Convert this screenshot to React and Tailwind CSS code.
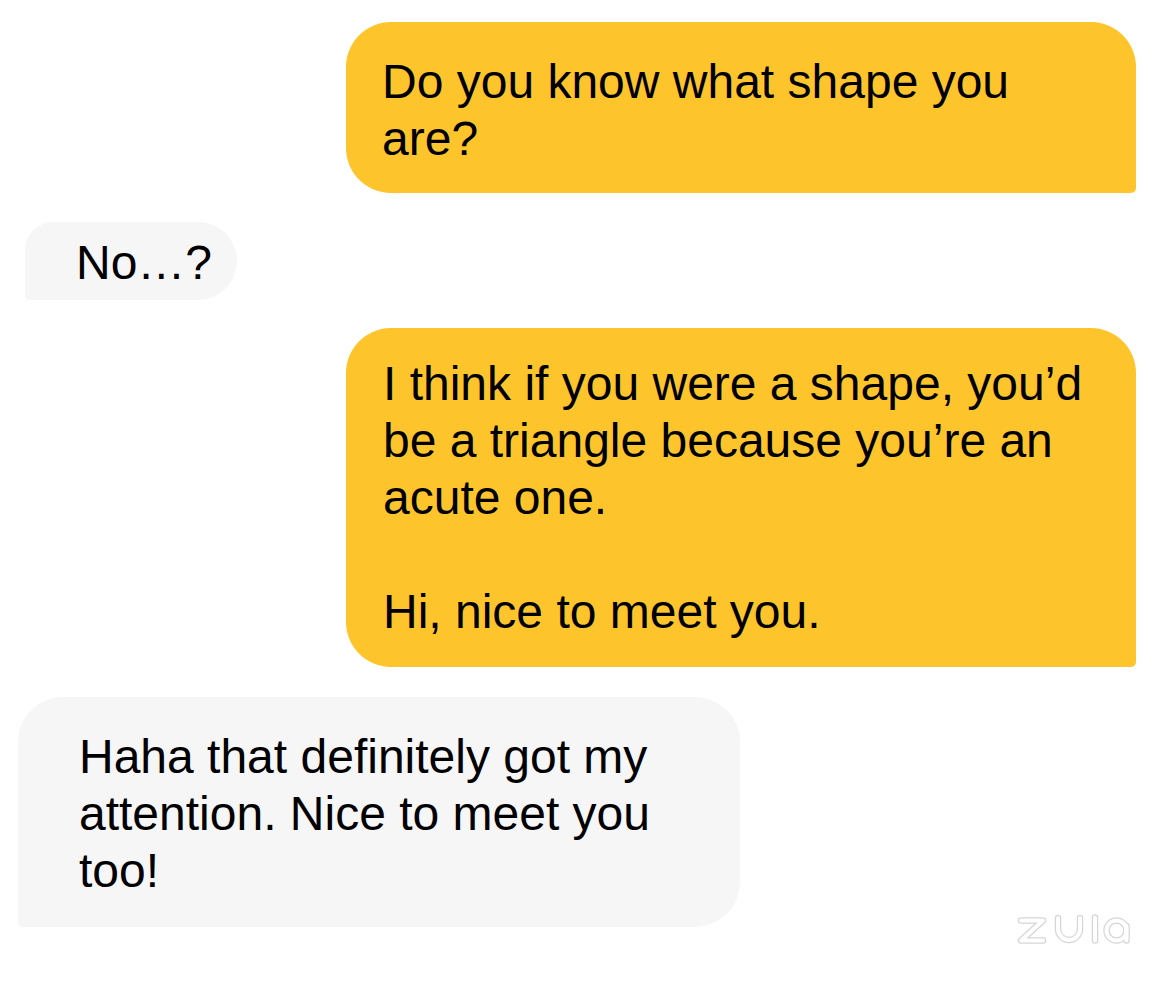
import React from "react";

function ZulaLogo() {
  const shapes = (
    <>
      <path d="M6,8.5 H28 L6,28.5 H28" />
      <path d="M43,6 V17 A11,11 0 0 0 65,17 V6" />
      <path d="M80,5.5 V28.5" />
      <circle cx="101.5" cy="18.5" r="10" />
      <path d="M111.5,14 V28.5" />
    </>
  );
  return (
    <svg width="120" height="36" viewBox="0 0 120 36" fill="none">
      <g stroke="#d6d6d6" strokeWidth="6.5" strokeLinecap="round" strokeLinejoin="round">
        {shapes}
      </g>
      <g stroke="#ffffff" strokeWidth="4" strokeLinecap="round" strokeLinejoin="round">
        {shapes}
      </g>
    </svg>
  );
}

export default function App() {
  return (
    <div
      className="relative w-[1170px] h-[982px] bg-white flex flex-col text-black text-[48px] leading-[57px]"
      style={{ fontFamily: '"Liberation Sans", Arial, sans-serif' }}
    >
      <div className="self-end mr-[34px] mt-[22px] w-[790px] bg-[#fdc52b] rounded-tl-[45px] rounded-tr-[45px] rounded-bl-[45px] rounded-br-[5px] pt-[31px] pb-[26px] pl-[36px] pr-[38px]">
        Do you know what shape you are?
      </div>

      <div className="self-start ml-[25px] mt-[29px] bg-[#f6f6f6] rounded-tl-[28px] rounded-tr-[39px] rounded-br-[39px] rounded-bl-[4px] pt-[12px] pb-[9px] pl-[51px] pr-[25px]">
        No…?
      </div>

      <div className="self-end mr-[34px] mt-[28px] w-[790px] bg-[#fdc52b] rounded-tl-[45px] rounded-tr-[45px] rounded-bl-[45px] rounded-br-[5px] pt-[27px] pb-[27px] pl-[37px] pr-[37px]">
        <div>I think if you were a shape, you’d be a triangle because you’re an acute one.</div>
        <div className="h-[57px]" />
        <div>Hi, nice to meet you.</div>
      </div>

      <div className="self-start ml-[18px] mt-[30px] w-[722px] bg-[#f6f6f6] rounded-tl-[45px] rounded-tr-[45px] rounded-br-[45px] rounded-bl-[5px] pt-[31px] pb-[28px] pl-[61px] pr-[37px]">
        Haha that definitely got my attention. Nice to meet you too!
      </div>

      <div className="absolute left-[1015px] top-[912px]">
        <ZulaLogo />
      </div>
    </div>
  );
}
